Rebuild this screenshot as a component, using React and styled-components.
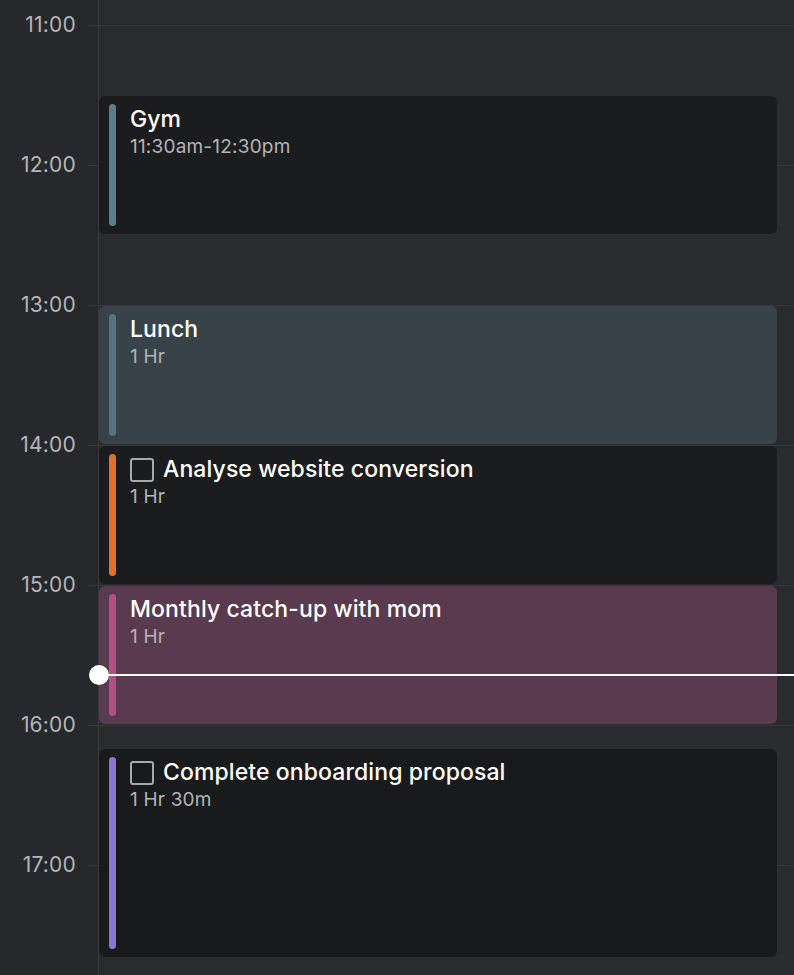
import React from 'react'
import styled, { createGlobalStyle } from 'styled-components'

const HOUR = 140
const START = 10

// rows from 10:00 to 18:00, only the visible hours get a label
const hours = [10, 11, 12, 13, 14, 15, 16, 17, 18]
const labelled = (h) => h >= 11 && h <= 17

const events = [
  { title: 'Gym', sub: '11:30am-12:30pm', start: 11.5, end: 12.5, bg: '#1b1c1e', bar: '#5d7d8f' },
  { title: 'Lunch', sub: '1 Hr', start: 13, end: 14, bg: '#384349', bar: '#587183' },
  { title: 'Analyse website conversion', sub: '1 Hr', start: 14, end: 15, bg: '#1b1c1e', bar: '#e2702a', task: true },
  { title: 'Monthly catch-up with mom', sub: '1 Hr', start: 15, end: 16, bg: '#5a3a4f', bar: '#b14f86' },
  { title: 'Complete onboarding proposal', sub: '1 Hr 30m', start: 16 + 1 / 6, end: 17 + 2 / 3, bg: 'rgba(24,25,27,0.94)', bar: '#8b77d2', task: true },
]

const NOW = 15 + 38.5 / 60

const App = () => {
  return (
    <Page>
      <GlobalStyle />
      <Calendar>
        <Gutter>
          {hours.map((h) => (
            <HourLabelRow key={h}>
              <HourLabel>{labelled(h) ? `${h}:00` : ''}</HourLabel>
              <Tick />
            </HourLabelRow>
          ))}
        </Gutter>
        <Timeline>
          {hours.map((h) => (
            <HourRow key={h} />
          ))}
          {events.map((e) => (
            <EventCard
              key={e.title}
              $bg={e.bg}
              style={{
                top: (e.start - START) * HOUR + 1,
                height: (e.end - e.start) * HOUR - 2,
              }}
            >
              <Bar $color={e.bar} />
              <EventBody>
                <TitleRow>
                  {e.task && <Checkbox />}
                  <Title>{e.title}</Title>
                </TitleRow>
                <Sub>{e.sub}</Sub>
              </EventBody>
            </EventCard>
          ))}
          <NowLine style={{ top: (NOW - START) * HOUR - 1 }}>
            <NowDot />
          </NowLine>
        </Timeline>
      </Calendar>
    </Page>
  )
}

export default App

const GlobalStyle = createGlobalStyle`
html, body {
  margin: 0;
  padding: 0;
  background: #2a2b2f;
  font-family: Inter, "Noto Sans", "Liberation Sans", sans-serif;
}
`

const Page = styled.div`
width: 794px;
height: 975px;
overflow: hidden;
background: #2a2b2f;
`

const Calendar = styled.div`
display: grid;
grid-template-columns: 99px 1fr;
margin-top: -115px;
`

const Gutter = styled.div`
display: flex;
flex-direction: column;
background: #27282c;
border-right: 1px solid #37383c;
`

const HourLabelRow = styled.div`
height: ${HOUR}px;
display: flex;
align-items: flex-start;
`

const HourLabel = styled.span`
width: 76px;
flex-shrink: 0;
text-align: right;
margin-top: -14px;
height: 28px;
font-size: 21px;
line-height: 28px;
color: #b4b5b8;
letter-spacing: 0.2px;
`

const Tick = styled.div`
margin-left: 12px;
flex: 1;
height: 1px;
background: #35363a;
`

const Timeline = styled.div`
position: relative;
display: flex;
flex-direction: column;
`

const HourRow = styled.div`
height: ${HOUR}px;
box-sizing: border-box;
border-top: 1px solid #35363a;
`

const EventCard = styled.div`
position: absolute;
left: 0;
width: 678px;
box-sizing: border-box;
display: flex;
padding: 8px 10px;
gap: 14px;
border-radius: 6px;
background: ${(p) => p.$bg};
`

const Bar = styled.div`
width: 7px;
flex-shrink: 0;
border-radius: 4px;
background: ${(p) => p.$color};
`

const EventBody = styled.div`
display: flex;
flex-direction: column;
`

const TitleRow = styled.div`
display: flex;
align-items: center;
gap: 9px;
`

const Checkbox = styled.div`
width: 20px;
height: 20px;
border: 2px solid #a9aaad;
border-radius: 3px;
`

const Title = styled.span`
font-size: 23px;
line-height: 31px;
color: #ffffff;
font-weight: 500;
letter-spacing: 0.1px;
`

const Sub = styled.span`
font-size: 19px;
line-height: 24px;
color: #b3b4b7;
letter-spacing: 0.2px;
`

const NowLine = styled.div`
position: absolute;
left: 0;
right: 0;
height: 2px;
background: #ffffff;
`

const NowDot = styled.div`
position: absolute;
left: -10px;
top: -9px;
width: 20px;
height: 20px;
border-radius: 50%;
background: #ffffff;
`
